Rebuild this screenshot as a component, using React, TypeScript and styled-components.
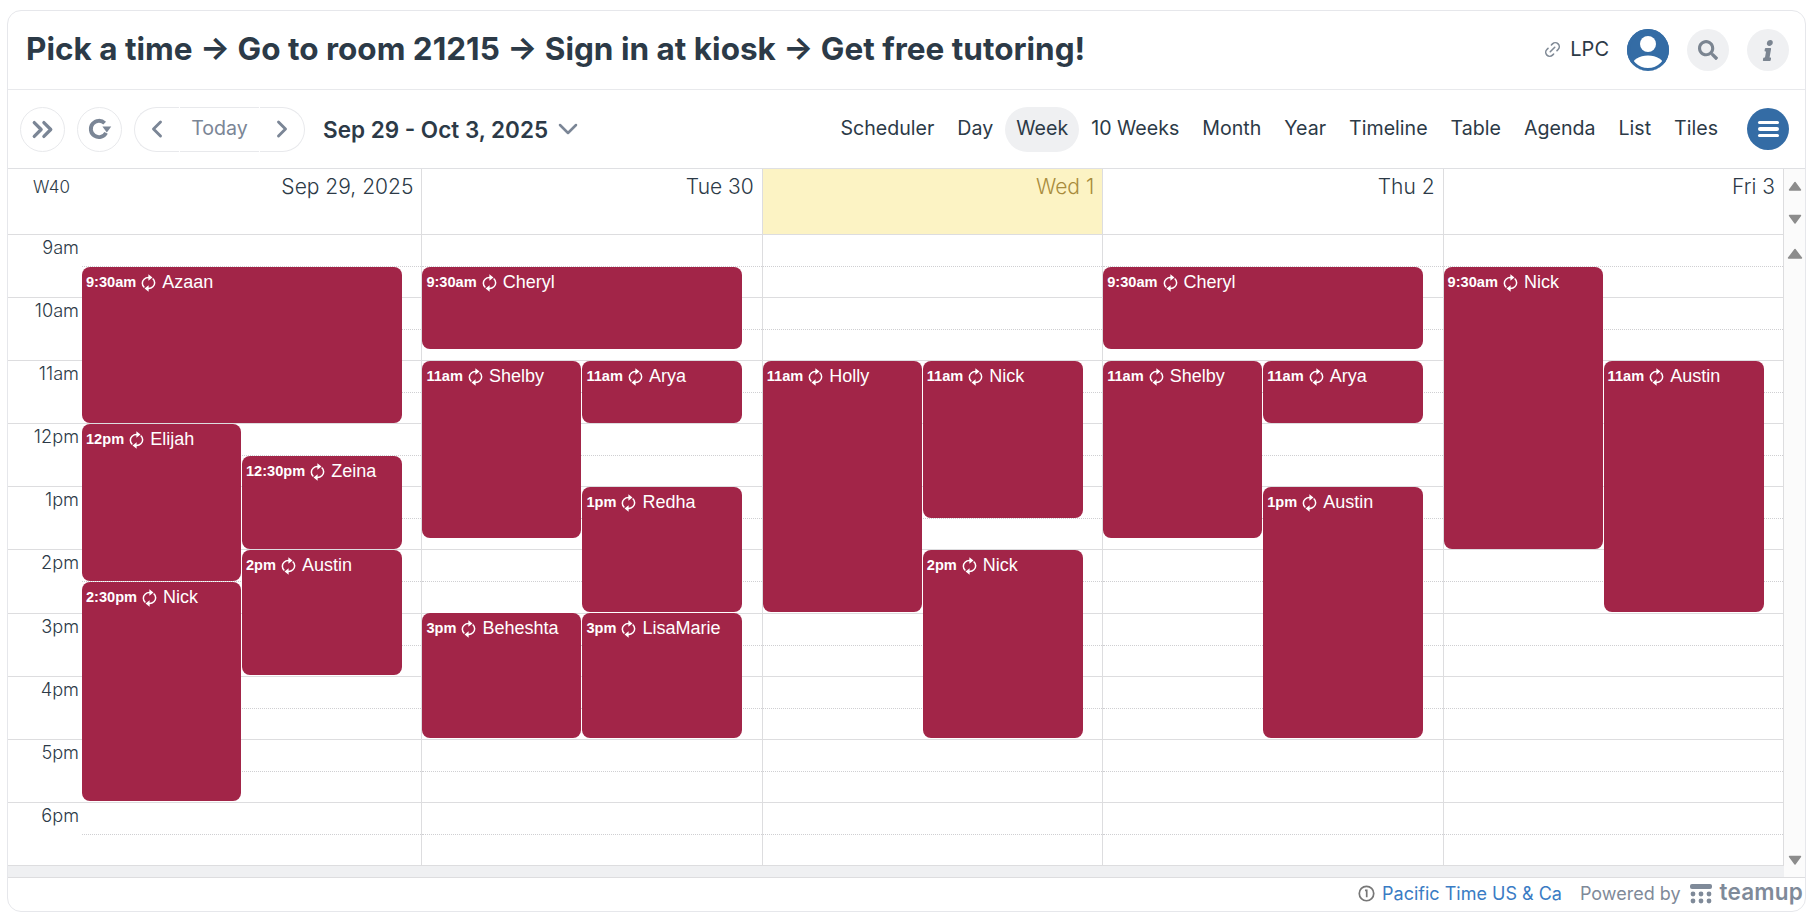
import React from "react";
import styled, { createGlobalStyle } from "styled-components";
import { ChevronLeft, ChevronRight, ChevronDown, ChevronsRight, Link2 } from "lucide-react";
import { FaSearch, FaInfo } from "react-icons/fa";

const HOUR = 63.1;
const EVENT_HOUR = 63;

const Global = createGlobalStyle`
  html, body { margin: 0; padding: 0; background: #fff; }
  body { font-family: Inter, "Liberation Sans", sans-serif; color: #2c3a47; }
  * { box-sizing: border-box; }
`;

const Page = styled.div`
  padding: 10px 14px 0 7px;
  height: 912px;
  overflow: hidden;
`;

const Card = styled.div`
  width: 1799px;
  height: 902px;
  border: 1px solid #e6e7eb;
  border-radius: 14px;
  display: flex;
  flex-direction: column;
  overflow: hidden;
  background: #fff;
`;

const TitleBar = styled.header`
  height: 79px;
  flex: none;
  display: flex;
  align-items: center;
  padding: 0 16px 0 18px;
  border-bottom: 1px solid #e8e9ec;
`;

const Title = styled.h1`
  margin: -4px 0 0;
  font-size: 31.5px;
  font-weight: 650;
  color: #2c3a47;
  flex: 1;
  white-space: nowrap;
`;

const Owner = styled.span`
  display: flex;
  align-items: center;
  gap: 8px;
  font-size: 20px;
  color: #2c3a47;
  margin: -2px 18px 0 0;
  svg { color: #808a96; }
`;

const RoundIcon = styled.span`
  width: 42px;
  height: 42px;
  border-radius: 50%;
  background: #eff0f2;
  color: #7b8591;
  display: flex;
  align-items: center;
  justify-content: center;
  margin-left: 18px;
`;

const Avatar = styled.svg`
  width: 42px;
  height: 42px;
  display: block;
`;

const Toolbar = styled.div`
  height: 79px;
  flex: none;
  display: flex;
  align-items: center;
  padding: 0 16px 0 12px;
  border-bottom: 1px solid #dfe0e3;
`;

const CircleButton = styled.span`
  width: 45px;
  height: 45px;
  border: 1px solid #e8e9ec;
  border-radius: 50%;
  display: flex;
  align-items: center;
  justify-content: center;
  color: #7b8696;
  margin-right: 12px;
`;

const NavGroup = styled.div`
  display: flex;
  align-items: center;
  gap: 1px;
  color: #7b8696;
  font-size: 19.6px;
  margin-right: 18px;
`;

const NavSegment = styled.span<{ $side?: "left" | "right" }>`
  height: 45px;
  width: ${(p) => (p.$side ? "45px" : "79px")};
  display: flex;
  align-items: center;
  justify-content: center;
  padding-bottom: ${(p) => (p.$side ? "0" : "2px")};
  border: 1px solid #e8e9ec;
  border-left-width: ${(p) => (p.$side === "left" ? "1px" : "0")};
  border-right-width: ${(p) => (p.$side === "right" ? "1px" : "0")};
  border-radius: ${(p) =>
    p.$side === "left" ? "23px 0 0 23px" : p.$side === "right" ? "0 23px 23px 0" : "0"};
`;

const DateRange = styled.div`
  display: flex;
  align-items: center;
  gap: 4px;
  font-size: 22.5px;
  font-weight: 600;
  color: #2c3a47;
  flex: 1;
  white-space: nowrap;
  svg { color: #7b8696; }
`;

const Tabs = styled.nav`
  display: flex;
  align-items: center;
  gap: 1px;
  margin-right: 18px;
`;

const Tab = styled.span<{ $active?: boolean }>`
  height: 45px;
  display: flex;
  align-items: center;
  padding: 0 11px 2px;
  border-radius: 23px;
  font-size: 19.6px;
  color: #2c3a47;
  background: ${(p) => (p.$active ? "#eff0f2" : "transparent")};
`;

const MenuButton = styled.span`
  width: 42px;
  height: 42px;
  border-radius: 50%;
  background: #346ca5;
  display: flex;
  flex-direction: column;
  align-items: center;
  justify-content: center;
  gap: 3px;
  i {
    display: block;
    width: 21px;
    height: 3.5px;
    border-radius: 2px;
    background: #fff;
  }
`;

const Main = styled.div`
  flex: 1;
  min-height: 0;
  display: flex;
`;

const CalendarArea = styled.div`
  width: 1776px;
  flex: none;
  display: flex;
  flex-direction: column;
`;

const HeadRow = styled.div`
  height: 65px;
  flex: none;
  display: grid;
  grid-template-columns: 74px repeat(5, 1fr);
`;

const WeekCell = styled.div`
  font-size: 17px;
  font-weight: 300;
  color: #2c3a47;
  padding: 8px 0 0 25px;
`;

const DayHead = styled.div<{ $today?: boolean }>`
  border-right: 1px solid #dddddf;
  background: ${(p) => (p.$today ? "#fcf3c4" : "#fff")};
  color: ${(p) => (p.$today ? "#a88b3c" : "#2c3a47")};
  font-size: 21px;
  font-weight: 300;
  text-align: right;
  padding: 5px 8px 0 0;
`;

const BodyGrid = styled.div`
  height: 631px;
  flex: none;
  display: grid;
  grid-template-columns: 74px repeat(5, 1fr);
`;

const Gutter = styled.div``;

const GutterSlot = styled.div`
  height: ${HOUR}px;
  border-top: 1px solid #dddddf;
  text-align: right;
  padding-right: 3px;
  font-size: 18.2px;
  font-weight: 300;
  line-height: 25px;
  color: #2c3a47;
`;

const DayColumn = styled.div`
  position: relative;
  border-right: 1px solid #dddddf;
`;

const Slot = styled.div`
  height: ${HOUR}px;
  border-top: 1px solid #dddddf;
  position: relative;
  &::after {
    content: "";
    position: absolute;
    left: 0;
    right: 0;
    top: 31px;
    border-top: 1px dotted #cfcfd2;
  }
`;

const EventCard = styled.div`
  position: absolute;
  background: #a22548;
  border-radius: 8px;
  color: #fff;
  font-family: "Liberation Sans", Arial, sans-serif;
  padding: 5px 0 0 4px;
  display: flex;
  align-items: flex-start;
  white-space: nowrap;
  overflow: hidden;
`;

const EventTime = styled.b`
  font-size: 14.6px;
  line-height: 21px;
  margin-right: 5px;
  font-kerning: normal;
  text-rendering: optimizeLegibility;
`;

const EventName = styled.span`
  font-size: 18px;
  line-height: 20px;
  margin-left: 6px;
`;

const RepeatIcon = styled.svg`
  width: 15px;
  height: 18px;
  flex: none;
  margin-top: 2px;
`;

const HScroll = styled.div`
  height: 12px;
  flex: none;
  background: #eff0f2;
  border-top: 1px solid #dddddf;
`;

const ScrollRail = styled.div`
  flex: 1;
  background: #fbfbfb;
  position: relative;
`;

const ArrowShape = styled.svg`
  position: absolute;
  left: 3px;
  width: 16px;
  height: 12px;
`;

const Footer = styled.footer`
  height: 34px;
  flex: none;
  display: flex;
  align-items: center;
  justify-content: flex-end;
  padding: 0 2px 2px 0;
  border-top: 1px solid #dddddf;
  font-size: 18px;
  color: #7f8a99;
`;

const ZoneLink = styled.span`
  color: #3a7cc4;
  margin: 0 18px 0 7px;
`;

const TimeIcon = styled.svg`
  width: 17px;
  height: 17px;
`;

const Logo = styled.svg`
  width: 22px;
  height: 22px;
  margin: 0 8px 0 9px;
`;

const Brand = styled.span`
  font-size: 22.5px;
  font-weight: 600;
  letter-spacing: 0.2px;
  color: #7f8a99;
  line-height: 1;
  margin-top: -3px;
`;

type Ev = { s: number; e: number; l: number; w: 1 | 2; t: string; n: string };

const days: { label: string; today?: boolean; events: Ev[] }[] = [
  {
    label: "Sep 29, 2025",
    events: [
      { s: 9.5, e: 12, l: 0, w: 2, t: "9:30am", n: "Azaan" },
      { s: 12, e: 14.5, l: 0, w: 1, t: "12pm", n: "Elijah" },
      { s: 12.5, e: 14, l: 1, w: 1, t: "12:30pm", n: "Zeina" },
      { s: 14, e: 16, l: 1, w: 1, t: "2pm", n: "Austin" },
      { s: 14.5, e: 18, l: 0, w: 1, t: "2:30pm", n: "Nick" },
    ],
  },
  {
    label: "Tue 30",
    events: [
      { s: 9.5, e: 10.83, l: 0, w: 2, t: "9:30am", n: "Cheryl" },
      { s: 11, e: 13.83, l: 0, w: 1, t: "11am", n: "Shelby" },
      { s: 11, e: 12, l: 1, w: 1, t: "11am", n: "Arya" },
      { s: 13, e: 15, l: 1, w: 1, t: "1pm", n: "Redha" },
      { s: 15, e: 17, l: 0, w: 1, t: "3pm", n: "Beheshta" },
      { s: 15, e: 17, l: 1, w: 1, t: "3pm", n: "LisaMarie" },
    ],
  },
  {
    label: "Wed 1",
    today: true,
    events: [
      { s: 11, e: 15, l: 0, w: 1, t: "11am", n: "Holly" },
      { s: 11, e: 13.5, l: 1, w: 1, t: "11am", n: "Nick" },
      { s: 14, e: 17, l: 1, w: 1, t: "2pm", n: "Nick" },
    ],
  },
  {
    label: "Thu 2",
    events: [
      { s: 9.5, e: 10.83, l: 0, w: 2, t: "9:30am", n: "Cheryl" },
      { s: 11, e: 13.83, l: 0, w: 1, t: "11am", n: "Shelby" },
      { s: 11, e: 12, l: 1, w: 1, t: "11am", n: "Arya" },
      { s: 13, e: 17, l: 1, w: 1, t: "1pm", n: "Austin" },
    ],
  },
  {
    label: "Fri 3",
    events: [
      { s: 9.5, e: 14, l: 0, w: 1, t: "9:30am", n: "Nick" },
      { s: 11, e: 15, l: 1, w: 1, t: "11am", n: "Austin" },
    ],
  },
];

const hours = ["9am", "10am", "11am", "12pm", "1pm", "2pm", "3pm", "4pm", "5pm", "6pm"];

const Repeat = () => (
  <RepeatIcon
    viewBox="0.8 0.5 13.4 17"
    preserveAspectRatio="none"
    fill="none"
    stroke="#fff"
    strokeWidth="1.35"
  >
    <path d="M3.8 13.2A5.4 5.4 0 0 1 2 9.2 5.4 5.4 0 0 1 7.4 3.8H8" />
    <path d="M11.2 4.8A5.4 5.4 0 0 1 13 8.8 5.4 5.4 0 0 1 7.6 14.2H7" />
    <path d="M7.4 0.8l3.6 3-3.6 3z" fill="#fff" stroke="none" />
    <path d="M7.6 11.2l-3.6 3 3.6 3z" fill="#fff" stroke="none" />
  </RepeatIcon>
);

const RailArrow = ({ top, down, big }: { top: number; down?: boolean; big?: boolean }) => (
  <ArrowShape viewBox="0 0 16 12" style={{ top }}>
    <path
      d={down ? "M2.5 2.5h11L8 10z" : big ? "M1.5 10h13L8 1.5z" : "M2.5 10h11L8 2.5z"}
      fill="#8c8c8c"
      stroke="#8c8c8c"
      strokeWidth="1.4"
      strokeLinejoin="round"
    />
  </ArrowShape>
);

export default function App() {
  return (
    <Page>
      <Global />
      <Card>
        <TitleBar>
          <Title>Pick a time → Go to room 21215 → Sign in at kiosk → Get free tutoring!</Title>
          <Owner>
            <Link2 size={19} strokeWidth={2} style={{ transform: "rotate(-45deg)" }} />
            LPC
          </Owner>
          <Avatar viewBox="0 0 42 42">
            <defs>
              <clipPath id="av">
                <circle cx="21" cy="21" r="21" />
              </clipPath>
            </defs>
            <circle cx="21" cy="21" r="21" fill="#346ca5" />
            <circle cx="21" cy="15" r="8" fill="#fff" />
            <ellipse cx="21" cy="37" rx="16" ry="10.5" fill="#fff" clipPath="url(#av)" />
            <circle cx="21" cy="21" r="19.5" fill="none" stroke="#346ca5" strokeWidth="3" />
          </Avatar>
          <RoundIcon>
            <FaSearch size={20} />
          </RoundIcon>
          <RoundIcon>
            <FaInfo size={21} style={{ transform: "skewX(-10deg)" }} />
          </RoundIcon>
        </TitleBar>
        <Toolbar>
          <CircleButton>
            <ChevronsRight size={33} strokeWidth={2.4} />
          </CircleButton>
          <CircleButton>
            <svg width="26" height="26" viewBox="0 0 24 24" fill="none">
              <path d="M17.6 15.6A7.5 7.5 0 1 1 16.3 6.6" stroke="currentColor" strokeWidth="3.6" />
              <path d="M14.2 9.6h8.2l-4.1 5.6z" fill="currentColor" />
            </svg>
          </CircleButton>
          <NavGroup>
            <NavSegment $side="left">
              <ChevronLeft size={28} strokeWidth={2.5} />
            </NavSegment>
            <NavSegment>Today</NavSegment>
            <NavSegment $side="right">
              <ChevronRight size={28} strokeWidth={2.5} />
            </NavSegment>
          </NavGroup>
          <DateRange>
            Sep 29 - Oct 3, 2025
            <ChevronDown size={32} strokeWidth={1.9} />
          </DateRange>
          <Tabs>
            {["Scheduler", "Day", "Week", "10 Weeks", "Month", "Year", "Timeline", "Table", "Agenda", "List", "Tiles"].map(
              (t) => (
                <Tab key={t} $active={t === "Week"}>
                  {t}
                </Tab>
              )
            )}
          </Tabs>
          <MenuButton>
            <i />
            <i />
            <i />
          </MenuButton>
        </Toolbar>
        <Main>
          <CalendarArea>
            <HeadRow>
              <WeekCell>W40</WeekCell>
              {days.map((d) => (
                <DayHead key={d.label} $today={d.today}>
                  {d.label}
                </DayHead>
              ))}
            </HeadRow>
            <BodyGrid>
              <Gutter>
                {hours.map((h) => (
                  <GutterSlot key={h}>{h}</GutterSlot>
                ))}
              </Gutter>
              {days.map((d) => (
                <DayColumn key={d.label}>
                  {hours.map((h) => (
                    <Slot key={h} />
                  ))}
                  {d.events.map((e) => (
                    <EventCard
                      key={e.t + e.n}
                      style={{
                        top: (e.s - 9) * EVENT_HOUR + 1,
                        height: (e.e - e.s) * EVENT_HOUR - 1,
                        left: e.l * 160,
                        width: e.w === 2 ? 320 : e.l ? 160 : 159,
                      }}
                    >
                      <EventTime>{e.t}</EventTime>
                      <Repeat />
                      <EventName>{e.n}</EventName>
                    </EventCard>
                  ))}
                </DayColumn>
              ))}
            </BodyGrid>
            <HScroll />
          </CalendarArea>
          <ScrollRail>
            <RailArrow top={11} />
            <RailArrow down top={44} />
            <RailArrow big top={79} />
            <RailArrow down top={685} />
          </ScrollRail>
        </Main>
        <Footer>
          <TimeIcon viewBox="0 0 16 16" fill="none" stroke="#777" strokeWidth="1.6">
            <circle cx="8" cy="8" r="6.8" />
            <path d="M6.6 5h1.6v6.5" />
          </TimeIcon>
          <ZoneLink>Pacific Time US &amp; Ca</ZoneLink>
          Powered by
          <Logo viewBox="0 0 22 22" fill="#7f8a99">
            <rect x="0" y="1" width="22" height="5" rx="2" />
            <circle cx="3" cy="11" r="2.4" />
            <circle cx="11" cy="11" r="2.4" />
            <circle cx="19" cy="11" r="2.4" />
            <circle cx="3" cy="18" r="2.4" />
            <circle cx="11" cy="18" r="2.4" />
            <circle cx="19" cy="18" r="2.4" />
          </Logo>
          <Brand>teamup</Brand>
        </Footer>
      </Card>
    </Page>
  );
}
